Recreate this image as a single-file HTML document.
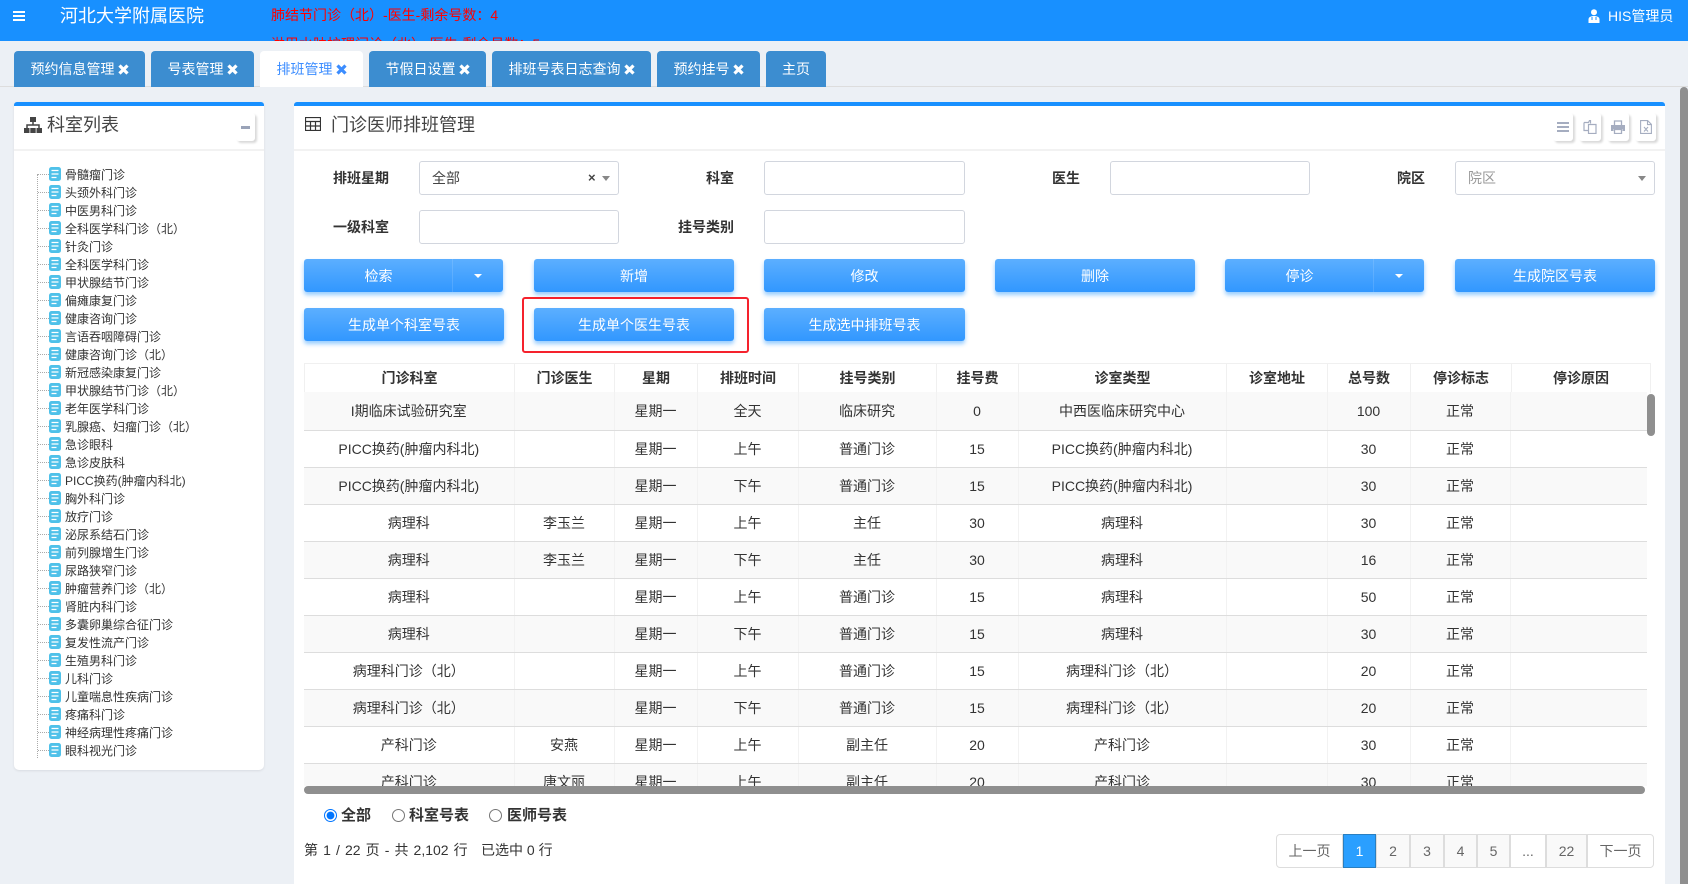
<!DOCTYPE html>
<html lang="zh">
<head>
<meta charset="utf-8">
<title>门诊医师排班管理</title>
<style>
*{box-sizing:border-box}
html,body{margin:0;padding:0;width:1688px;height:884px;overflow:hidden;background:#ecf0f5;font-family:"Liberation Sans","Noto Sans CJK SC",sans-serif;font-size:14px;color:#333}
.a{position:absolute}
#hd{position:absolute;left:0;top:0;width:1688px;height:41px;background:#1890ff;overflow:hidden;color:#fff}
.tab{position:absolute;top:51px;height:36px;background:#3c8dd0;color:#fff;border-radius:4px 4px 0 0;display:flex;align-items:center;justify-content:center;gap:3px;line-height:36px;white-space:nowrap}
.tab.on{background:#fff;color:#3c8dff}
.panel{position:absolute;background:#fff;border-top:4px solid #1890ff;border-radius:3px 3px 0 0}
.ttl{position:absolute;font-size:18px;line-height:26px;color:#444;white-space:nowrap}
.tool{position:absolute;top:113px;height:28px;background:#fff;box-shadow:2px 2px 2px #d8d8d8;border-radius:3px;display:flex;align-items:center;justify-content:center}
.lb{position:absolute;font-weight:bold;line-height:20px;color:#333;white-space:nowrap}
.rl{font-size:15px}
.ip{position:absolute;height:34px;background:#fff;border:1px solid #d2d6de;border-radius:3px;line-height:32px;padding-left:12px;color:#444}
.btn{position:absolute;height:33px;line-height:35px;text-align:center;color:#fff;border-radius:3px;background:linear-gradient(#5cafff,#3197ff);box-shadow:0 3px 4px rgba(24,144,255,.45);white-space:nowrap}
.sp{position:absolute;top:0;bottom:0;width:1px;background:rgba(255,255,255,.12)}
.car{position:absolute;top:15px;width:0;height:0;border-left:4px solid transparent;border-right:4px solid transparent;border-top:4px solid #fff}
ul{list-style:none;margin:0;padding:0;position:absolute;left:37px;top:165px;width:220px}
li{position:relative;height:18px;line-height:20px;font-size:12px;padding-left:28px;color:#333;white-space:nowrap}
li:before{content:"";position:absolute;left:1px;top:9px;width:11px;border-top:1px dotted #aaa}
li svg{position:absolute;left:12px;top:2px}
table{border-collapse:collapse;table-layout:fixed;position:absolute}
#th th{height:29px;padding:0;text-align:center;font-size:14px;border-right:1px solid #f0f0f0;border-top:1px solid #f0f0f0;color:#333;line-height:20px}
#th th:first-child{border-left:1px solid #f0f0f0}
#tb td{height:37px;padding:0;text-align:center;border-right:1px solid #f2f2f2;border-bottom:1px solid #ddd;line-height:20px;color:#333;white-space:nowrap}
#tb tr:nth-child(odd){background:#f9f9f9}
.pg{position:absolute;top:834px;height:34px;line-height:32px;text-align:center;color:#666;border:1px solid #ddd;margin-left:-1px;background:#f9f9f9}
input[type=radio]{position:absolute;margin:0;width:13px;height:13px}
</style>
</head>
<body>
<div id="hd">
<svg class="a" style="left:13px;top:11px" width="12" height="10" viewBox="0 0 12 10"><path d="M0 1h12M0 5h12M0 9h12" stroke="#fff" stroke-width="2"/></svg>
<div class="a" style="left:60px;top:3px;font-size:18px;line-height:26px;white-space:nowrap">河北大学附属医院</div>
<div class="a" style="left:271px;top:5px;color:#f00;line-height:20px;white-space:nowrap">肺结节门诊（北）-医生-剩余号数：4</div>
<div class="a" style="left:271px;top:34px;color:#f00;line-height:20px;white-space:nowrap">淋巴水肿护理门诊（北）-医生-剩余号数：5</div>
<svg class="a" style="left:1588px;top:9px" width="12" height="14" viewBox="0 0 12 14"><circle cx="6" cy="3.2" r="3" fill="#fff"/><path d="M0.5 14V10.5C0.5 8 3 7 6 7s5.500 1 5.500 3.500V14z" fill="#fff"/><path d="M4 8v3M8 8v3" stroke="#1890ff" stroke-width="1"/></svg>
<div class="a" style="left:1608px;top:6px;line-height:20px;white-space:nowrap">HIS管理员</div>
</div>

<div class="a" style="left:0;top:86px;width:1688px;height:1px;background:#ddd"></div>
<div class="tab" style="left:14px;width:131px">预约信息管理<svg width="11" height="11" viewBox="0 0 11 11"><path d="M1.500 1.500l8 8M9.500 1.500l-8 8" stroke="#fff" stroke-width="3.200"/></svg></div>
<div class="tab" style="left:151px;width:103px">号表管理<svg width="11" height="11" viewBox="0 0 11 11"><path d="M1.500 1.500l8 8M9.500 1.500l-8 8" stroke="#fff" stroke-width="3.200"/></svg></div>
<div class="tab on" style="left:260px;width:103px">排班管理<svg width="11" height="11" viewBox="0 0 11 11"><path d="M1.500 1.500l8 8M9.500 1.500l-8 8" stroke="#3c8dff" stroke-width="3.200"/></svg></div>
<div class="tab" style="left:369px;width:117px">节假日设置<svg width="11" height="11" viewBox="0 0 11 11"><path d="M1.500 1.500l8 8M9.500 1.500l-8 8" stroke="#fff" stroke-width="3.200"/></svg></div>
<div class="tab" style="left:492px;width:159px">排班号表日志查询<svg width="11" height="11" viewBox="0 0 11 11"><path d="M1.500 1.500l8 8M9.500 1.500l-8 8" stroke="#fff" stroke-width="3.200"/></svg></div>
<div class="tab" style="left:657px;width:103px">预约挂号<svg width="11" height="11" viewBox="0 0 11 11"><path d="M1.500 1.500l8 8M9.500 1.500l-8 8" stroke="#fff" stroke-width="3.200"/></svg></div>
<div class="tab" style="left:766px;width:60px">主页</div>

<!-- left panel -->
<div class="panel" style="left:14px;top:102px;width:250px;height:668px;border-radius:3px 3px 5px 5px;box-shadow:0 1px 2px #d8dbe0"></div>
<div class="a" style="left:14px;top:149px;width:250px;height:2px;background:#f2f2f2"></div>
<svg class="a" style="left:24px;top:117px" width="18" height="16" viewBox="0 0 18 16"><path d="M6 0h6v5H6z" fill="#444"/><path d="M9 5v3M3 11V8h12v3" stroke="#444" stroke-width="1.500" fill="none"/><path d="M0 11h5.500v5H0zM6.300 11h5.400v5H6.300zM12.500 11H18v5h-5.500z" fill="#444"/></svg>
<div class="ttl" style="left:47px;top:112px">科室列表</div>
<div class="tool" style="left:236px;width:19px"><div style="width:9px;height:3px;background:#9aa3b8"></div></div>
<div class="a" style="left:37px;top:174px;height:584px;border-left:1px dotted #aaa"></div>
<ul>
<li><svg width="12" height="14"><use href="#f"/></svg>骨髓瘤门诊</li>
<li><svg width="12" height="14"><use href="#f"/></svg>头颈外科门诊</li>
<li><svg width="12" height="14"><use href="#f"/></svg>中医男科门诊</li>
<li><svg width="12" height="14"><use href="#f"/></svg>全科医学科门诊（北）</li>
<li><svg width="12" height="14"><use href="#f"/></svg>针灸门诊</li>
<li><svg width="12" height="14"><use href="#f"/></svg>全科医学科门诊</li>
<li><svg width="12" height="14"><use href="#f"/></svg>甲状腺结节门诊</li>
<li><svg width="12" height="14"><use href="#f"/></svg>偏瘫康复门诊</li>
<li><svg width="12" height="14"><use href="#f"/></svg>健康咨询门诊</li>
<li><svg width="12" height="14"><use href="#f"/></svg>言语吞咽障碍门诊</li>
<li><svg width="12" height="14"><use href="#f"/></svg>健康咨询门诊（北）</li>
<li><svg width="12" height="14"><use href="#f"/></svg>新冠感染康复门诊</li>
<li><svg width="12" height="14"><use href="#f"/></svg>甲状腺结节门诊（北）</li>
<li><svg width="12" height="14"><use href="#f"/></svg>老年医学科门诊</li>
<li><svg width="12" height="14"><use href="#f"/></svg>乳腺癌、妇瘤门诊（北）</li>
<li><svg width="12" height="14"><use href="#f"/></svg>急诊眼科</li>
<li><svg width="12" height="14"><use href="#f"/></svg>急诊皮肤科</li>
<li><svg width="12" height="14"><use href="#f"/></svg>PICC换药(肿瘤内科北)</li>
<li><svg width="12" height="14"><use href="#f"/></svg>胸外科门诊</li>
<li><svg width="12" height="14"><use href="#f"/></svg>放疗门诊</li>
<li><svg width="12" height="14"><use href="#f"/></svg>泌尿系结石门诊</li>
<li><svg width="12" height="14"><use href="#f"/></svg>前列腺增生门诊</li>
<li><svg width="12" height="14"><use href="#f"/></svg>尿路狭窄门诊</li>
<li><svg width="12" height="14"><use href="#f"/></svg>肿瘤营养门诊（北）</li>
<li><svg width="12" height="14"><use href="#f"/></svg>肾脏内科门诊</li>
<li><svg width="12" height="14"><use href="#f"/></svg>多囊卵巢综合征门诊</li>
<li><svg width="12" height="14"><use href="#f"/></svg>复发性流产门诊</li>
<li><svg width="12" height="14"><use href="#f"/></svg>生殖男科门诊</li>
<li><svg width="12" height="14"><use href="#f"/></svg>儿科门诊</li>
<li><svg width="12" height="14"><use href="#f"/></svg>儿童喘息性疾病门诊</li>
<li><svg width="12" height="14"><use href="#f"/></svg>疼痛科门诊</li>
<li><svg width="12" height="14"><use href="#f"/></svg>神经病理性疼痛门诊</li>
<li><svg width="12" height="14"><use href="#f"/></svg>眼科视光门诊</li>
</ul>
<svg width="0" height="0" style="position:absolute"><defs><g id="f"><rect width="12" height="14" rx="2.500" fill="#4fc1e9"/><path d="M2.500 3.500h7M2.500 7h7M2.500 10.500h5" stroke="#fff" stroke-width="1.300"/></g></defs></svg>

<!-- right panel -->
<div class="panel" style="left:294px;top:102px;width:1371px;height:782px"></div>
<div class="a" style="left:294px;top:149px;width:1371px;height:2px;background:#f2f2f2"></div>
<svg class="a" style="left:305px;top:117px" width="16" height="14" viewBox="0 0 16 14"><path d="M.5.500h15v13H.500zM.5 4.500h15M.5 9h15M5.500 4.500v9M10.500 4.500v9" fill="none" stroke="#333" stroke-width="1.200"/></svg>
<div class="ttl" style="left:331px;top:112px">门诊医师排班管理</div>
<div class="tool" style="left:1553px;width:20px"><svg width="12" height="10" viewBox="0 0 12 10"><path d="M0 1h12M0 5h12M0 9h12" stroke="#a5adc0" stroke-width="2"/></svg></div>
<div class="tool" style="left:1579px;width:22px"><svg width="14" height="14" viewBox="0 0 14 14"><path d="M1 2.500h4.500l1-2h1v3M1 2.500v8h4M5.500 4.500H13v9H5.500z" fill="none" stroke="#a5adc0" stroke-width="1.200"/></svg></div>
<div class="tool" style="left:1607px;width:22px"><svg width="14" height="14" viewBox="0 0 14 14"><path d="M3.500 5V1h7v4" fill="none" stroke="#a5adc0" stroke-width="1.300"/><path d="M0 5h14v6h-2.500V9h-9v2H0z" fill="#a5adc0"/><path d="M3.500 9.500h7v4h-7z" fill="none" stroke="#a5adc0" stroke-width="1.300"/></svg></div>
<div class="tool" style="left:1635px;width:21px"><svg width="12" height="14" viewBox="0 0 12 14"><path d="M.6.600h7l3.800 3.800v9H.600zM7.500.600v4h4M4 7l4 4.500M8 7l-4 4.500" fill="none" stroke="#a5adc0" stroke-width="1.100"/></svg></div>

<div class="lb" style="left:333px;top:168px">排班星期</div>
<div class="ip" style="left:419px;top:161px;width:200px">全部<span class="a" style="left:168px;top:0;color:#444;font-size:13px;font-weight:bold">×</span><span class="a" style="left:182px;top:14px;width:0;height:0;border-left:4px solid transparent;border-right:4px solid transparent;border-top:5px solid #888"></span></div>
<div class="lb" style="left:706px;top:168px">科室</div>
<div class="ip" style="left:764px;top:161px;width:201px"></div>
<div class="lb" style="left:1052px;top:168px">医生</div>
<div class="ip" style="left:1110px;top:161px;width:200px"></div>
<div class="lb" style="left:1397px;top:168px">院区</div>
<div class="ip" style="left:1455px;top:161px;width:200px;color:#999">院区<span class="a" style="left:182px;top:14px;width:0;height:0;border-left:4px solid transparent;border-right:4px solid transparent;border-top:5px solid #888"></span></div>
<div class="lb" style="left:333px;top:217px">一级科室</div>
<div class="ip" style="left:419px;top:210px;width:200px"></div>
<div class="lb" style="left:678px;top:217px">挂号类别</div>
<div class="ip" style="left:764px;top:210px;width:201px"></div>

<div class="btn" style="left:304px;top:259px;width:199px;padding-right:50px">检索<span class="sp" style="left:148px"></span><span class="car" style="left:170px"></span></div>
<div class="btn" style="left:534px;top:259px;width:200px">新增</div>
<div class="btn" style="left:764px;top:259px;width:201px">修改</div>
<div class="btn" style="left:995px;top:259px;width:200px">删除</div>
<div class="btn" style="left:1225px;top:259px;width:199px;padding-right:50px">停诊<span class="sp" style="left:148px"></span><span class="car" style="left:170px"></span></div>
<div class="btn" style="left:1455px;top:259px;width:200px">生成院区号表</div>
<div class="btn" style="left:304px;top:308px;width:200px">生成单个科室号表</div>
<div class="btn" style="left:534px;top:308px;width:200px">生成单个医生号表</div>
<div class="btn" style="left:764px;top:308px;width:201px">生成选中排班号表</div>
<div class="a" style="left:522px;top:297px;width:227px;height:56px;border:2px solid #f5222d;border-radius:3px"></div>

<table id="th" style="left:304px;top:363px;width:1346px;background:#fff">
<colgroup><col style="width:210px"><col style="width:100px"><col style="width:83px"><col style="width:101px"><col style="width:138px"><col style="width:82px"><col style="width:208px"><col style="width:101px"><col style="width:83px"><col style="width:101px"><col style="width:139px"></colgroup>
<tr><th>门诊科室</th><th>门诊医生</th><th>星期</th><th>排班时间</th><th>挂号类别</th><th>挂号费</th><th>诊室类型</th><th>诊室地址</th><th>总号数</th><th>停诊标志</th><th>停诊原因</th></tr>
</table>

<div class="a" style="left:304px;top:392px;width:1343px;height:394px;overflow:hidden">
<table id="tb" style="left:0;top:0;width:1343px">
<colgroup><col style="width:210px"><col style="width:100px"><col style="width:83px"><col style="width:101px"><col style="width:138px"><col style="width:82px"><col style="width:208px"><col style="width:101px"><col style="width:83px"><col style="width:100px"><col style="width:137px"></colgroup>
<tr style="height:38px"><td>I期临床试验研究室</td><td></td><td>星期一</td><td>全天</td><td>临床研究</td><td>0</td><td>中西医临床研究中心</td><td></td><td>100</td><td>正常</td><td></td></tr>
<tr><td>PICC换药(肿瘤内科北)</td><td></td><td>星期一</td><td>上午</td><td>普通门诊</td><td>15</td><td>PICC换药(肿瘤内科北)</td><td></td><td>30</td><td>正常</td><td></td></tr>
<tr><td>PICC换药(肿瘤内科北)</td><td></td><td>星期一</td><td>下午</td><td>普通门诊</td><td>15</td><td>PICC换药(肿瘤内科北)</td><td></td><td>30</td><td>正常</td><td></td></tr>
<tr><td>病理科</td><td>李玉兰</td><td>星期一</td><td>上午</td><td>主任</td><td>30</td><td>病理科</td><td></td><td>30</td><td>正常</td><td></td></tr>
<tr><td>病理科</td><td>李玉兰</td><td>星期一</td><td>下午</td><td>主任</td><td>30</td><td>病理科</td><td></td><td>16</td><td>正常</td><td></td></tr>
<tr><td>病理科</td><td></td><td>星期一</td><td>上午</td><td>普通门诊</td><td>15</td><td>病理科</td><td></td><td>50</td><td>正常</td><td></td></tr>
<tr><td>病理科</td><td></td><td>星期一</td><td>下午</td><td>普通门诊</td><td>15</td><td>病理科</td><td></td><td>30</td><td>正常</td><td></td></tr>
<tr><td>病理科门诊（北）</td><td></td><td>星期一</td><td>上午</td><td>普通门诊</td><td>15</td><td>病理科门诊（北）</td><td></td><td>20</td><td>正常</td><td></td></tr>
<tr><td>病理科门诊（北）</td><td></td><td>星期一</td><td>下午</td><td>普通门诊</td><td>15</td><td>病理科门诊（北）</td><td></td><td>20</td><td>正常</td><td></td></tr>
<tr><td>产科门诊</td><td>安燕</td><td>星期一</td><td>上午</td><td>副主任</td><td>20</td><td>产科门诊</td><td></td><td>30</td><td>正常</td><td></td></tr>
<tr><td>产科门诊</td><td>唐文丽</td><td>星期一</td><td>上午</td><td>副主任</td><td>20</td><td>产科门诊</td><td></td><td>30</td><td>正常</td><td></td></tr>
</table>
</div>
<div class="a" style="left:304px;top:786px;width:1341px;height:8px;background:#8f8f8f;border-radius:4px"></div>
<div class="a" style="left:1647px;top:394px;width:8px;height:42px;background:#8f8f8f;border-radius:4px"></div>

<input type="radio" name="r" checked style="left:324px;top:809px">
<div class="lb rl" style="left:341px;top:806px">全部</div>
<input type="radio" name="r" style="left:392px;top:809px">
<div class="lb rl" style="left:409px;top:806px">科室号表</div>
<input type="radio" name="r" style="left:489px;top:809px">
<div class="lb rl" style="left:507px;top:806px">医师号表</div>
<div class="a" style="left:304px;top:840px;line-height:20px;white-space:nowrap;word-spacing:1.200px">第 1 / 22 页 - 共 2,102 行</div>
<div class="a" style="left:481px;top:840px;line-height:20px;white-space:nowrap">已选中 0 行</div>

<div class="pg" style="left:1277px;width:67px;background:#fff;border-radius:4px 0 0 4px">上一页</div>
<div class="pg" style="left:1344px;width:33px;background:#2a9fff;border-color:#2a7fc0;color:#fff;z-index:1">1</div>
<div class="pg" style="left:1377px;width:34px">2</div>
<div class="pg" style="left:1411px;width:34px">3</div>
<div class="pg" style="left:1445px;width:33px">4</div>
<div class="pg" style="left:1478px;width:33px">5</div>
<div class="pg" style="left:1511px;width:36px;background:#fff">...</div>
<div class="pg" style="left:1547px;width:41px">22</div>
<div class="pg" style="left:1588px;width:67px;background:#fff;border-radius:0 4px 4px 0">下一页</div>

<div class="a" style="left:1680px;top:87px;width:8px;height:797px;background:#8f8f8f;border-radius:4px 4px 0 0"></div>
</body>
</html>
